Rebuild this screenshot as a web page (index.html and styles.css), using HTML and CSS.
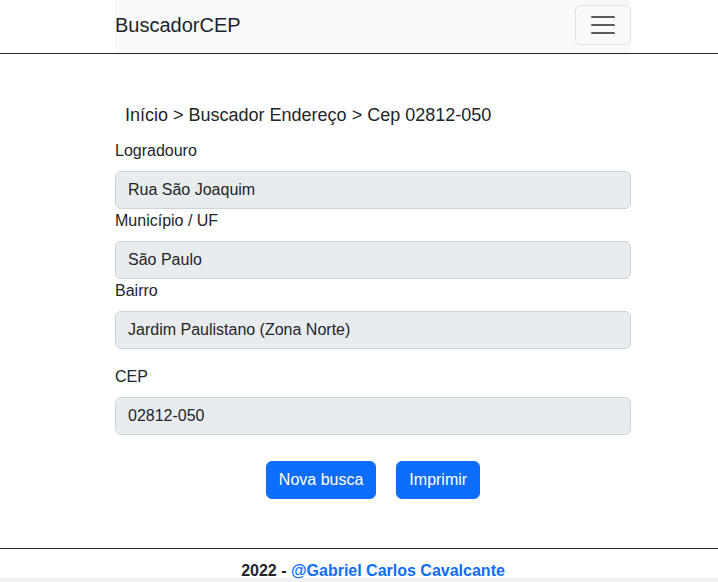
FILE: index.html
```html
<!DOCTYPE html>
<html lang="pt-BR">
<head>
<meta charset="utf-8">
<title>BuscadorCEP</title>
<link rel="stylesheet" href="styles.css">
</head>
<body>
<header class="topbar">
  <nav class="navbar">
    <span class="brand">BuscadorCEP</span>
    <button class="toggler" type="button" aria-label="Menu">
      <svg width="30" height="30" viewBox="0 0 30 30"><path d="M4 7h22M4 15h22M4 23h22" stroke="rgba(33,37,41,0.75)" stroke-width="2" stroke-linecap="round" fill="none"/></svg>
    </button>
  </nav>
</header>
<main class="content">
  <p class="crumbs">Início &gt; Buscador Endereço &gt; Cep 02812-050</p>
  <label class="lbl">Logradouro</label>
  <div class="field">Rua São Joaquim</div>
  <label class="lbl">Município / UF</label>
  <div class="field">São Paulo</div>
  <label class="lbl">Bairro</label>
  <div class="field">Jardim Paulistano (Zona Norte)</div>
  <label class="lbl lbl-gap">CEP</label>
  <div class="field">02812-050</div>
  <div class="actions">
    <button class="btn" type="button">Nova busca</button>
    <button class="btn" type="button">Imprimir</button>
  </div>
</main>
<footer class="foot">
  <p class="foot-text">2022 - <a href="#" class="foot-link">@Gabriel Carlos Cavalcante</a></p>
</footer>
</body>
</html>
```
FILE: styles.css
```css
* { box-sizing: border-box; }
html, body { margin: 0; padding: 0; }
body {
  font-family: "Liberation Sans", Arial, sans-serif;
  font-size: 16px;
  line-height: 1.5;
  color: #212529;
  background: #fff;
  height: 582px;
  overflow: hidden;
}
.topbar {
  border-bottom: 1px solid #212529;
  height: 54px;
}
.navbar,
.content,
.foot-text {
  width: 516px;
  margin-left: 115px;
}
.navbar {
  height: 53px;
  background: #f8f9fa;
  display: flex;
  align-items: center;
  justify-content: space-between;
  padding-bottom: 3px;
}
.brand {
  font-size: 20px;
  line-height: 30px;
}
.toggler {
  width: 56px;
  height: 40px;
  margin-top: 0;
  border: 1px solid rgba(0,0,0,0.1);
  border-radius: 6px;
  background: transparent;
  display: flex;
  align-items: center;
  justify-content: center;
  padding: 0;
}
.content {
  padding-top: 48px;
  display: flex;
  flex-direction: column;
}
.crumbs {
  margin: 0 0 10px 10px;
  font-size: 18px;
  line-height: 27px;
}
.lbl {
  display: block;
  line-height: 24px;
  margin-bottom: 8px;
}
.lbl-gap { margin-top: 16px; }
.field {
  height: 38px;
  padding: 6px 12px;
  background: #e9ecef;
  border: 1px solid #ced4da;
  border-radius: 6px;
  line-height: 24px;
}
.actions {
  display: flex;
  justify-content: center;
  gap: 20px;
  margin-top: 26px;
}
.btn {
  font-family: inherit;
  font-size: 16px;
  line-height: 24px;
  height: 38px;
  padding: 6px 12px;
  color: #fff;
  background: #0d6efd;
  border: 1px solid #0d6efd;
  border-radius: 6px;
}
.foot {
  margin-top: 49px;
  border-top: 1px solid #212529;
  height: 34px;
  padding-top: 10px;
  background: linear-gradient(#fff 0, #fff 29px, #f1f2f4 29px);
}
.foot-text {
  margin-top: 0;
  margin-bottom: 0;
  text-align: center;
  font-weight: bold;
  line-height: 24px;
}
.foot-link {
  color: #0d6efd;
  text-decoration: none;
}
```
